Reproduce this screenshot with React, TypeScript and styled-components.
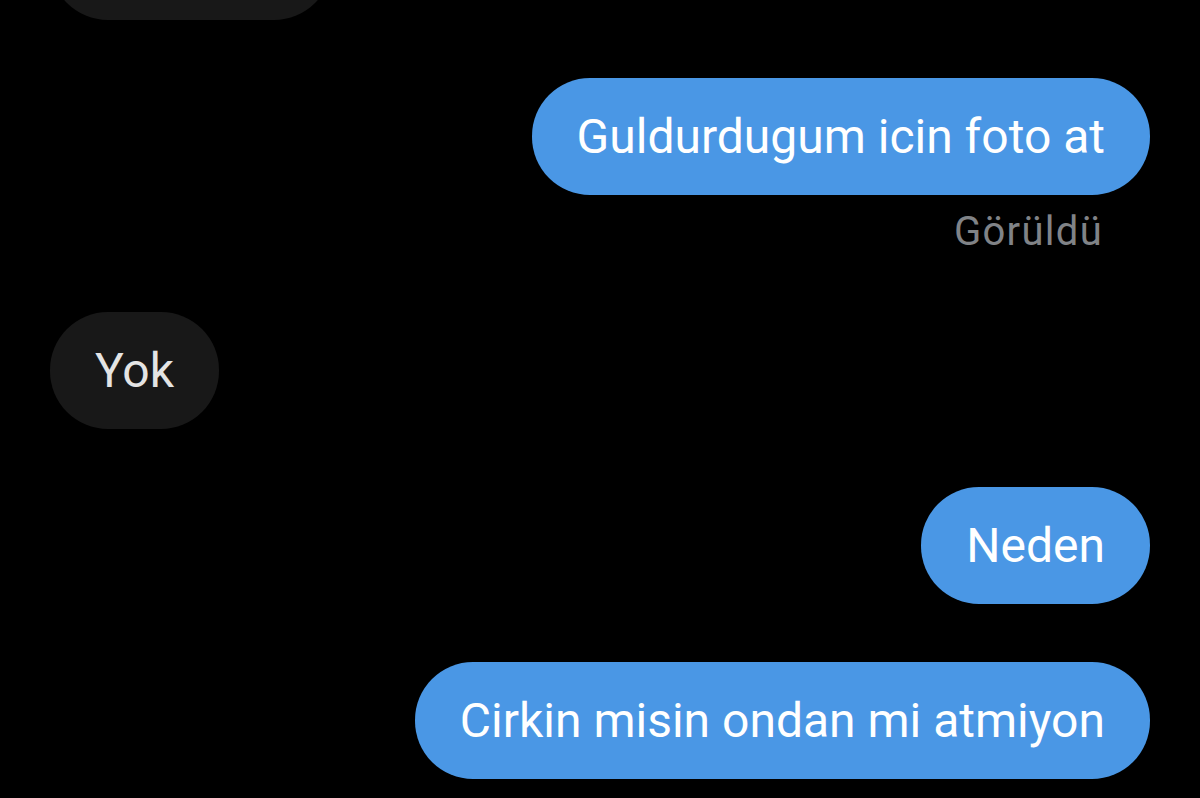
import React from "react";
import styled, { createGlobalStyle } from "styled-components";

const Global = createGlobalStyle`
  html, body { margin: 0; padding: 0; background: #000; }
  body { overflow: hidden; }
  #root { height: 798px; }
`;

const Page = styled.main`
  height: 798px;
  background: #000;
  overflow: hidden;
  font-family: Roboto, "Noto Sans", sans-serif;
`;

const Thread = styled.div`
  display: flex;
  flex-direction: column;
  gap: 58px;
  margin-top: -97px;
  padding: 0 50px;
`;

const Group = styled.div<{ $mine?: boolean }>`
  display: flex;
  flex-direction: column;
  align-items: ${(p) => (p.$mine ? "flex-end" : "flex-start")};
`;

const Bubble = styled.div<{ $mine?: boolean }>`
  box-sizing: border-box;
  height: 117px;
  display: flex;
  align-items: center;
  padding: 0 45px;
  border-radius: 58px;
  background: ${(p) => (p.$mine ? "#4a97e5" : "#181818")};
  color: ${(p) => (p.$mine ? "#ffffff" : "#e4e4e4")};
  font-size: 48px;
  line-height: 1;
  white-space: nowrap;
`;

const Receipt = styled.div`
  margin-top: 15px;
  padding-right: 47px;
  font-size: 40px;
  line-height: 44px;
  letter-spacing: 1.3px;
  color: #808387;
`;

type Msg = { text: string; mine?: boolean; seen?: boolean };

const messages: Msg[] = [
  { text: "Hahahah" },
  { text: "Guldurdugum icin foto at", mine: true, seen: true },
  { text: "Yok" },
  { text: "Neden", mine: true },
  { text: "Cirkin misin ondan mi atmiyon", mine: true },
];

export default function App() {
  return (
    <Page>
      <Global />
      <Thread>
        {messages.map((m, i) => (
          <Group key={i} $mine={m.mine}>
            <Bubble $mine={m.mine}>{m.text}</Bubble>
            {m.seen && <Receipt>Görüldü</Receipt>}
          </Group>
        ))}
      </Thread>
    </Page>
  );
}
